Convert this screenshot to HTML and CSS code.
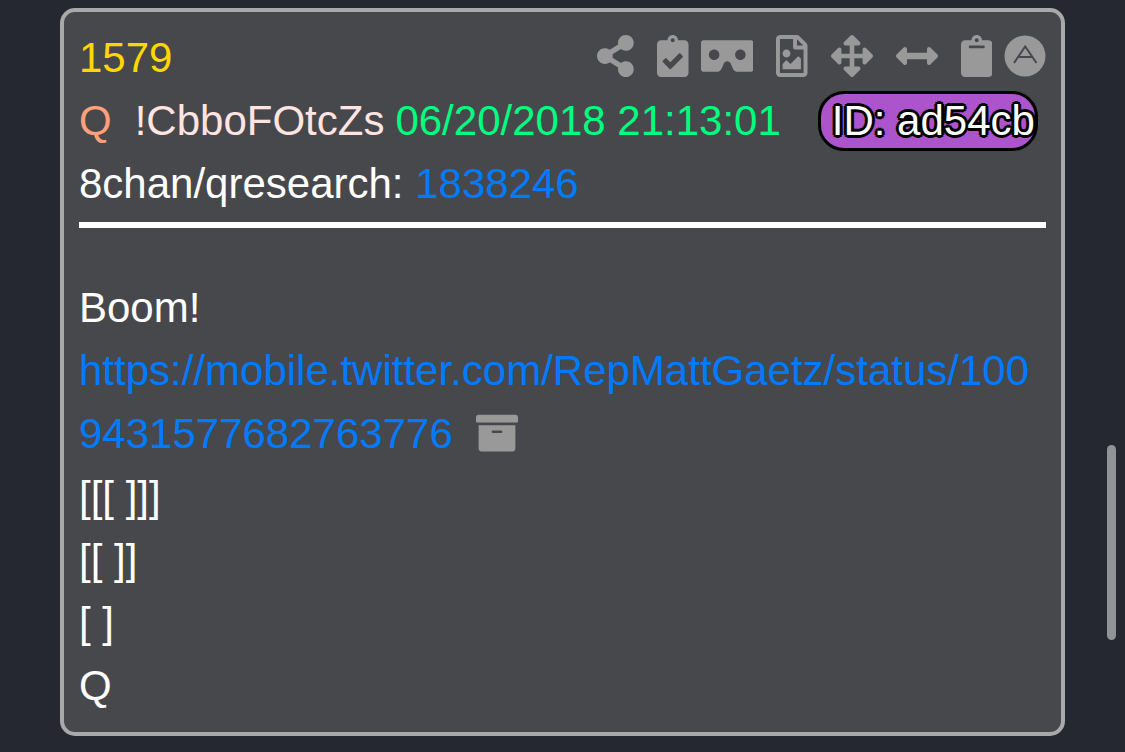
FILE: index.html
```html
<!DOCTYPE html>
<html lang="en">
<head>
    <meta charset="UTF-8">
    <meta name="viewport" content="width=device-width, initial-scale=1.0">
    <title>1579</title>
    <link rel="stylesheet" href="styles.css">
</head>
<body>
    <main class="container">
        <article class="post">
            <header class="post-header">
                <div class="top-row">
                    <span class="post-number">1579</span>
                    <div class="toolbar">
                        <button type="button" class="tool" aria-label="Share">
                            <svg class="icon" viewBox="0 0 448 512"><path d="M352 320c-22.608 0-43.387 7.819-59.79 20.895l-102.486-64.054a96.551 96.551 0 0 0 0-41.683l102.486-64.054C308.613 184.181 329.392 192 352 192c53.019 0 96-42.981 96-96S405.019 0 352 0s-96 42.981-96 96c0 7.158.79 14.13 2.276 20.841L155.79 180.895C139.387 167.819 118.608 160 96 160c-53.019 0-96 42.981-96 96s42.981 96 96 96c22.608 0 43.387-7.819 59.79-20.895l102.486 64.054A96.301 96.301 0 0 0 256 416c0 53.019 42.981 96 96 96s96-42.981 96-96-42.981-96-96-96z"/></svg>
                        </button>
                        <button type="button" class="tool spaced" aria-label="Copy checked">
                            <svg class="icon" viewBox="0 0 384 512"><path d="M336 64h-80c0-35.3-28.7-64-64-64s-64 28.7-64 64H48C21.5 64 0 85.5 0 112v352c0 26.5 21.5 48 48 48h288c26.5 0 48-21.5 48-48V112c0-26.5-21.5-48-48-48zM192 40c13.3 0 24 10.7 24 24s-10.7 24-24 24-24-10.7-24-24 10.7-24 24-24zm121.2 231.8l-143 141.8c-4.7 4.7-12.3 4.6-17-.1l-82.6-83.3c-4.7-4.7-4.6-12.3.1-17L99.1 285c4.7-4.7 12.3-4.6 17 .1l46 46.4 106-105.2c4.7-4.7 12.3-4.6 17 .1l28.2 28.4c4.7 4.8 4.6 12.3-.1 17z"/></svg>
                        </button>
                        <button type="button" class="tool" aria-label="Viewer">
                            <svg class="icon" viewBox="0 0 640 512"><path d="M608 64H32C14.33 64 0 78.33 0 96v320c0 17.67 14.33 32 32 32h160.22c25.19 0 48.03-14.77 58.36-37.74l27.74-61.64C286.21 331.08 302.35 320 320 320s33.79 11.08 41.68 28.62l27.74 61.64C399.75 433.23 422.6 448 447.78 448H608c17.67 0 32-14.33 32-32V96c0-17.67-14.33-32-32-32zM160 304c-35.35 0-64-28.65-64-64s28.65-64 64-64 64 28.65 64 64-28.65 64-64 64zm320 0c-35.35 0-64-28.65-64-64s28.65-64 64-64 64 28.65 64 64-28.65 64-64 64z"/></svg>
                        </button>
                        <button type="button" class="tool spaced" aria-label="Image">
                            <svg class="icon" viewBox="0 0 384 512"><path d="M369.9 97.9L286 14C277 5 264.8-.1 252.1-.1H48C21.5 0 0 21.5 0 48v416c0 26.5 21.5 48 48 48h288c26.5 0 48-21.5 48-48V131.9c0-12.7-5.1-25-14.1-34zM332.1 128H256V51.9l76.1 76.1zM48 464V48h160v104c0 13.3 10.7 24 24 24h104v288H48zm32-48h224V288l-23.5-23.5c-4.7-4.7-12.3-4.7-17 0L176 352l-39.5-39.5c-4.7-4.7-12.3-4.7-17 0L80 352v64zm48-240c-26.5 0-48 21.5-48 48s21.5 48 48 48 48-21.5 48-48-21.5-48-48-48z"/></svg>
                        </button>
                        <button type="button" class="tool spaced" aria-label="Move">
                            <svg class="icon" viewBox="0 0 512 512"><path d="M352.201 425.775l-79.196 79.196c-9.373 9.373-24.568 9.373-33.941 0l-79.196-79.196c-15.119-15.119-4.411-40.971 16.971-40.97h51.162L228 284H127.196v51.162c0 21.382-25.851 32.09-40.971 16.971L7.029 272.937c-9.373-9.373-9.373-24.569 0-33.941L86.225 159.8c15.119-15.119 40.971-4.411 40.971 16.971V228H228V127.196h-51.23c-21.382 0-32.09-25.851-16.971-40.971l79.196-79.196c9.373-9.373 24.568-9.373 33.941 0l79.196 79.196c15.119 15.119 4.411 40.971-16.971 40.971h-51.162V228h100.804v-51.162c0-21.382 25.851-32.09 40.97-16.971l79.196 79.196c9.373 9.373 9.373 24.569 0 33.941L425.773 352.2c-15.119 15.119-40.971 4.411-40.97-16.971V284H284v100.804h51.23c21.382 0 32.09 25.851 16.971 40.971z"/></svg>
                        </button>
                        <button type="button" class="tool spaced" aria-label="Widen">
                            <svg class="icon" viewBox="0 0 512 512"><path d="M377.941 169.941V216H134.059v-46.059c0-21.382-25.851-32.09-40.971-16.971L7.029 239.029c-9.373 9.373-9.373 24.568 0 33.941l86.059 86.059c15.119 15.119 40.971 4.411 40.971-16.971V296h243.882v46.059c0 21.382 25.851 32.09 40.971 16.971l86.059-86.059c9.373-9.373 9.373-24.568 0-33.941l-86.059-86.059c-15.119-15.12-40.971-4.412-40.971 16.97z"/></svg>
                        </button>
                        <button type="button" class="tool spaced" aria-label="Copy">
                            <svg class="icon" viewBox="0 0 384 512"><path d="M384 112v352c0 26.51-21.49 48-48 48H48c-26.51 0-48-21.49-48-48V112c0-26.51 21.49-48 48-48h80c0-35.29 28.71-64 64-64s64 28.71 64 64h80c26.51 0 48 21.49 48 48zM192 40c-13.255 0-24 10.745-24 24s10.745 24 24 24 24-10.745 24-24-10.745-24-24-24m96 114v-20a6 6 0 0 0-6-6H102a6 6 0 0 0-6 6v20a6 6 0 0 0 6 6h180a6 6 0 0 0 6-6z"/></svg>
                        </button>
                        <button type="button" class="tool" aria-label="Anon">
                            <svg class="icon" viewBox="0 0 42 42"><circle cx="21" cy="21" r="20.5"/><path class="cutout" d="M10 28L21.2 11.5L32.5 28M14.5 22H28"/></svg>
                        </button>
                    </div>
                </div>
                <div class="author-row">
                    <span class="name">Q</span>
                    <span class="trip">!CbboFOtcZs</span>
                    <time class="time" datetime="2018-06-20T21:13:01">06/20/2018 21:13:01</time>
                    <span class="user-id">ID: ad54cb</span>
                </div>
                <div>8chan/qresearch: <a href="#1838246">1838246</a></div>
            </header>
            <div class="post-body">
                <p>Boom!</p>
                <p class="link-line"><a href="https://mobile.twitter.com/RepMattGaetz/status/1009431577682763776">https://mobile.twitter.com/RepMattGaetz/status/1009431577682763776</a>
                    <a class="archive" href="#archive" aria-label="Archive"><svg class="icon" viewBox="0 0 512 512"><path d="M32 448c0 17.7 14.3 32 32 32h384c17.7 0 32-14.3 32-32V160H32v288zm160-212c0-6.6 5.4-12 12-12h104c6.6 0 12 5.4 12 12v8c0 6.6-5.4 12-12 12H204c-6.6 0-12-5.4-12-12v-8zM480 32H32C14.3 32 0 46.3 0 64v48c0 8.8 7.2 16 16 16h480c8.8 0 16-7.2 16-16V64c0-17.7-14.3-32-32-32z"/></svg></a>
                </p>
                <p>[[[ ]]]</p>
                <p>[[ ]]</p>
                <p>[ ]</p>
                <p>Q</p>
            </div>
        </article>
    </main>
    <div class="scroll-thumb"></div>
</body>
</html>
```

FILE: styles.css
```css
* {
    margin: 0;
    padding: 0;
    box-sizing: border-box;
}

body {
    font-family: 'Liberation Sans', Arial, sans-serif;
    font-size: 42px;
    line-height: 63px;
    color: #fff;
    background-color: #252731;
}

a {
    color: #007bff;
    text-decoration: none;
}

.container {
    padding: 8px 60px;
}

.post {
    padding: 14px 15px 15px;
    background-color: #47484c;
    border: 4px solid #a9a9a9;
    border-radius: 15px;
}

.post-header {
    padding-bottom: 7px;
    border-bottom: 6px solid #fff;
}

.top-row {
    display: flex;
    justify-content: space-between;
    align-items: center;
}

.post-number {
    color: #ffd700;
}

.toolbar {
    display: flex;
    align-items: center;
    gap: 12px;
    padding-bottom: 3px;
}

.tool {
    display: flex;
    border: none;
    background: none;
    cursor: pointer;
}

.spaced {
    margin-left: 11px;
}

.icon {
    display: block;
    height: 42px;
    fill: #999;
}

.cutout {
    fill: none;
    stroke: #47484c;
    stroke-width: 2;
}

.author-row {
    display: flex;
    flex-wrap: wrap;
    align-items: baseline;
    height: 63px;
}

.name {
    margin-right: 23px;
    color: #ffa07a;
}

.trip {
    margin-right: 11px;
    color: #ffe4e1;
}

.time {
    color: #00ff7f;
}

.user-id {
    margin-left: 37px;
    padding-left: 11px;
    line-height: 54px;
    background-color: #ab54cc;
    border: 3px solid #000;
    border-radius: 26px;
    text-shadow: 3px 0 #000, -3px 0 #000, 0 3px #000, 0 -3px #000,
        2px 2px #000, -2px -2px #000, 2px -2px #000, -2px 2px #000;
}

.post-body {
    padding-top: 48px;
}

.link-line {
    word-break: break-all;
}

.archive {
    display: inline-block;
    margin-left: 12px;
    vertical-align: -6px;
}

/* overlay scrollbar */
.scroll-thumb {
    position: fixed;
    top: 445px;
    right: 9px;
    width: 9px;
    height: 195px;
    background-color: #929397;
    border-radius: 5px;
}
```
